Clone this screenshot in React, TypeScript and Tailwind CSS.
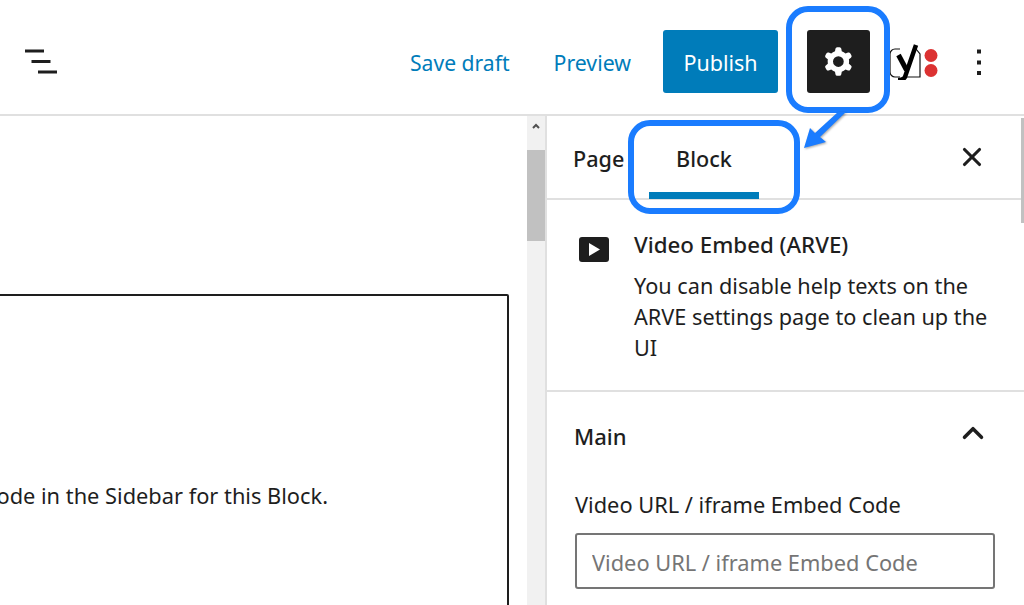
import { X, ChevronUp } from "lucide-react";

const sans = "font-['Noto_Sans','Open_Sans',sans-serif]";

function GearIcon() {
  return (
    <svg width="43" height="43" viewBox="0 0 24 24" fill="#fff">
      <path
        fillRule="evenodd"
        clipRule="evenodd"
        d="M10.289 4.836A1 1 0 0111.275 4h1.306a1 1 0 01.987.836l.244 1.466c.787.26 1.503.679 2.108 1.218l1.393-.522a1 1 0 011.216.437l.653 1.13a1 1 0 01-.23 1.273l-1.148.944a6.025 6.025 0 010 2.435l1.149.946a1 1 0 01.23 1.272l-.653 1.13a1 1 0 01-1.216.437l-1.394-.522c-.605.54-1.32.958-2.108 1.218l-.244 1.466a1 1 0 01-.987.836h-1.306a1 1 0 01-.986-.836l-.244-1.466a5.995 5.995 0 01-2.108-1.218l-1.394.522a1 1 0 01-1.217-.436l-.653-1.131a1 1 0 01.23-1.272l1.149-.946a6.026 6.026 0 010-2.435l-1.148-.944a1 1 0 01-.23-1.272l.653-1.131a1 1 0 011.217-.437l1.393.522a5.994 5.994 0 012.108-1.218l.244-1.466zM14.929 12a3 3 0 11-6 0 3 3 0 016 0z"
      />
    </svg>
  );
}

function YoastIcon() {
  return (
    <svg width="50" height="36" viewBox="0 0 50 36" fill="none">
      <path d="M11 5H6a5 5 0 0 0-5 5v18a5 5 0 0 0 5 5h5" stroke="#111" strokeWidth="1.200" />
      <path d="M25 5h2l4 5v23H15" stroke="#111" strokeWidth="1.200" />
      <path d="M27 1L16 33q-1.500 3-7 3" stroke="#000" strokeWidth="4.500" />
      <path d="M9.500 11l8 15" stroke="#000" strokeWidth="5" />
      <circle cx="42" cy="11.500" r="6.500" fill="#dc3232" />
      <circle cx="42" cy="26.500" r="6.500" fill="#dc3232" />
    </svg>
  );
}

export default function App() {
  return (
    <div className={`relative w-[1024px] h-[605px] overflow-hidden bg-white text-[#1e1e1e] ${sans}`}>
      <header className="flex items-center h-[116px] border-b-2 border-[#e0e0e0] pt-[9px]">
        <svg className="ml-[25px]" width="33" height="26" viewBox="0 0 33 26" fill="none" stroke="#1e1e1e" strokeWidth="3">
          <path d="M0 2h19M6.500 12.500h19M13 23h19" />
        </svg>
        <div className="ml-auto flex items-center">
          <a className="pt-[3px] text-[21.100px] text-[#007cba]">Save draft</a>
          <a className="ml-[44px] pt-[3px] text-[21.300px] text-[#007cba]">Preview</a>
          <button className="ml-[32px] w-[115px] h-[63px] pt-[3px] rounded-[3px] bg-[#007cba] text-white text-[21.500px]">Publish</button>
          <button className="ml-[29px] w-[63px] h-[63px] rounded-[3px] bg-[#1e1e1e] flex items-center justify-center">
            <GearIcon />
          </button>
          <div className="ml-[19px]"><YoastIcon /></div>
          <svg className="ml-[25px] mr-[30px]" width="30" height="36" viewBox="0 0 30 36" fill="#1e1e1e">
            <rect x="13" y="5.500" width="4" height="4" />
            <rect x="13" y="16.500" width="4" height="4" />
            <rect x="13" y="27" width="4" height="4" />
          </svg>
        </div>
      </header>

      <div className="flex h-[489px]">
        <main className="w-[527px] overflow-hidden pt-[178px]">
          <div className="ml-[-10px] w-[519px] h-[400px] border-2 border-[#1e1e1e] rounded-[2px] pt-[184px]">
            <div className="ml-[8px] flex justify-end w-[328px] overflow-hidden whitespace-nowrap text-[21.800px] leading-[32px]">
              Enter the Video URL / iframe Embed Code in the Sidebar for this Block.
            </div>
          </div>
        </main>

        <div className="relative w-[18px] bg-[#f1f1f1]">
          <div className="mt-[34px] h-[91px] bg-[#c1c1c1]" />
          <svg className="absolute left-[4px] top-[5px]" width="10" height="10" viewBox="0 0 10 10" fill="none" stroke="#505050" strokeWidth="2">
            <path d="M2 7l3-3 3 3" />
          </svg>
        </div>

        <aside className="relative flex-1 border-l-2 border-[#e0e0e0]">
          <div className="flex h-[84px] border-b-2 border-[#e0e0e0] relative">
            <span className="ml-[26px] mt-[27px] w-[50px] text-[21.600px] font-medium leading-[32px]">Page</span>
            <div className="ml-[26px] w-[110px] flex flex-col items-center">
              <span className="mt-[27px] text-[21.600px] font-medium leading-[32px]">Block</span>
              <div className="mt-auto mb-[-1px] h-[7px] w-full bg-[#007cba]" />
            </div>
            <X className="absolute left-[410px] top-[26px]" size={30} strokeWidth={2.500} color="#1e1e1e" />
          </div>

          <div className="flex h-[192px] border-b-2 border-[#e0e0e0]">
            <svg className="ml-[32px] mt-[37px] shrink-0" width="30" height="25" viewBox="0 0 30 25">
              <rect width="30" height="25" rx="3" fill="#1e1e1e" />
              <path d="M10 6l11 6.500-11 6.500z" fill="#fff" />
            </svg>
            <div className="ml-[25px] mt-[29px] w-[370px]">
              <div className="text-[22.300px] font-medium leading-[32px]">Video Embed (ARVE)</div>
              <p className="mt-[9px] text-[21.700px] leading-[31px]">You can disable help texts on the ARVE settings page to clean up the UI</p>
            </div>
          </div>

          <section className="px-[28px] pt-[28px]">
            <div className="flex items-center justify-between">
              <h2 className="ml-[-1px] text-[22px] font-medium leading-[32px]">Main</h2>
              <ChevronUp className="mr-[6px] mt-[-6px]" size={34} strokeWidth={2.500} color="#1e1e1e" />
            </div>
            <label className="block mt-[37px] text-[21.800px] leading-[32px]">Video URL / iframe Embed Code</label>
            <input
              className="mt-[12px] w-[420px] h-[56px] px-[15px] pt-[3px] border-2 border-[#757575] rounded-[3px] text-[21.800px] placeholder:text-[#757575] outline-none"
              placeholder="Video URL / iframe Embed Code"
            />
          </section>
          <div className="absolute right-0 top-[2px] h-[105px] w-[3px] bg-[#c1c1c1]" />
        </aside>
      </div>

      {/* blue annotation marks */}
      <div className="absolute left-[786px] top-[6px] w-[104px] h-[107px] border-[6px] border-[#1a7cff] rounded-[22px]" />
      <div className="absolute left-[628px] top-[120px] w-[172px] h-[94px] border-[6px] border-[#1a7cff] rounded-[22px]" />
      <svg className="absolute left-[800px] top-[108px] drop-shadow-[1px_1px_1px_rgba(0,0,0,0.35)]" width="50" height="44" viewBox="0 0 50 44" fill="#1a7cff">
        <path d="M4 40L10 20 15 25 38 4H46L20 29 26 34z" />
      </svg>
    </div>
  );
}
